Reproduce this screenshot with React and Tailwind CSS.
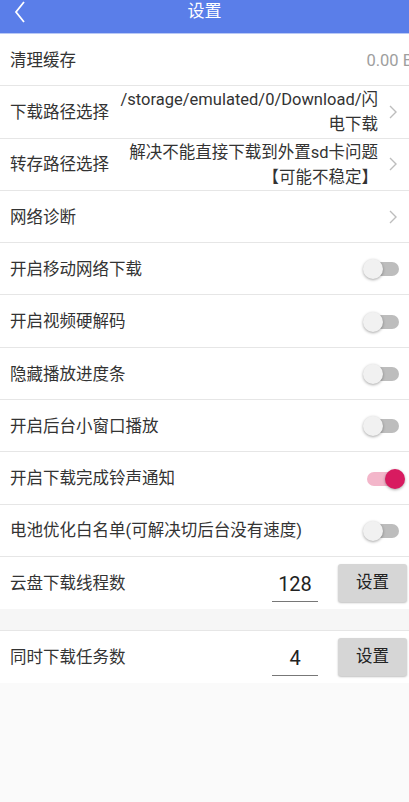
import React from "react";

const font = { fontFamily: 'Roboto, "Noto Sans CJK SC", sans-serif' };

function Chevron() {
  return (
    <svg width="10" height="16" viewBox="0 0 10 16" className="shrink-0">
      <path d="M2 2 L8 8 L2 14" fill="none" stroke="#bdbdbd" strokeWidth="1.4" />
    </svg>
  );
}

function Toggle({ on }) {
  return (
    <div className="relative w-[44px] h-[22px] shrink-0">
      <div
        className={`absolute left-[5px] top-[4px] w-[32px] h-[14px] rounded-full ${
          on ? "bg-[#f3b6ca]" : "bg-[#bdbdbd]"
        }`}
      />
      <div
        className={`absolute top-[1px] w-[20px] h-[20px] rounded-full shadow-[0_1px_3px_rgba(0,0,0,0.35)] ${
          on ? "left-[23px] bg-[#d81b60]" : "left-[1px] bg-[#f1f1f1]"
        }`}
      />
    </div>
  );
}

function Row({ children, className = "" }) {
  return (
    <div
      className={`box-border h-[52.3px] flex items-center pl-[10px] bg-white border-b border-[#e6e6e6] ${className}`}
    >
      {children}
    </div>
  );
}

const toggles = [
  ["开启移动网络下载", false],
  ["开启视频硬解码", false],
  ["隐藏播放进度条", false],
  ["开启后台小窗口播放", false],
  ["开启下载完成铃声通知", true],
  ["电池优化白名单(可解决切后台没有速度)", false],
];

function NumRow({ label, value, className = "" }) {
  return (
    <div className={`box-border h-[52px] flex items-center pl-[10px] pr-[2px] bg-white ${className}`}>
      <span className="text-[16.5px] text-[#333] flex-1 mt-[3px]">{label}</span>
      <div className="w-[46px] h-[34px] flex items-center justify-center border-b border-[#777] text-[20px] text-[#222] mr-[20px] mt-[4px]">
        {value}
      </div>
      <div className="w-[69px] h-[38px] rounded-[3px] bg-[#d6d6d6] shadow-[0_1px_2px_rgba(0,0,0,0.25)] flex items-center justify-center text-[16.5px] text-[#222]">
        设置
      </div>
    </div>
  );
}

export default function App() {
  return (
    <div className="w-[409px] min-h-[802px] bg-[#fafafa]" style={font}>
      <div className="h-[34px] bg-[#5a7ee9] border-b border-[#b9c9f5] box-border relative flex justify-center">
        <svg width="14" height="24" viewBox="0 0 14 24" className="absolute left-[13px] top-[0px]">
          <path d="M11 2 L3 12 L11 22" fill="none" stroke="white" strokeWidth="1.8" />
        </svg>
        <span className="text-white text-[17px] leading-[22px] mt-[0px]">设置</span>
      </div>

      <Row>
        <span className="text-[16.5px] text-[#333] flex-1 mt-[3px]">清理缓存</span>
        <span className="text-[16.5px] text-[#9e9e9e] mr-[-4px] mt-[3px]">0.00 B</span>
      </Row>
      <Row>
        <span className="text-[16.5px] text-[#333] flex-1 mt-[3px]">下载路径选择</span>
        <div className="text-[16.5px] leading-[25px] text-[#333] text-right mr-[10px] mt-[1px]">
          <div>/storage/emulated/0/Download/闪</div>
          <div>电下载</div>
        </div>
        <div className="mr-[11px]"><Chevron /></div>
      </Row>
      <Row>
        <span className="text-[16.5px] text-[#333] flex-1 mt-[3px]">转存路径选择</span>
        <div className="text-[16.5px] leading-[25px] text-[#333] text-right mr-[10px] mt-[1px]">
          <div>解决不能直接下载到外置sd卡问题</div>
          <div>【可能不稳定】</div>
        </div>
        <div className="mr-[11px]"><Chevron /></div>
      </Row>
      <Row>
        <span className="text-[16.5px] text-[#333] flex-1 mt-[3px]">网络诊断</span>
        <div className="mr-[11px]"><Chevron /></div>
      </Row>
      {toggles.map(([label, on]) => (
        <Row key={label}>
          <span className="text-[16.5px] text-[#333] flex-1 mt-[3px]">{label}</span>
          <div className="mr-[3px] mt-[1px]"><Toggle on={on} /></div>
        </Row>
      ))}
      <NumRow label="云盘下载线程数" value="128" />
      <div className="h-[22px] bg-[#f6f6f6] border-b border-[#e6e6e6]" />
      <NumRow label="同时下载任务数" value="4" />
    </div>
  );
}
